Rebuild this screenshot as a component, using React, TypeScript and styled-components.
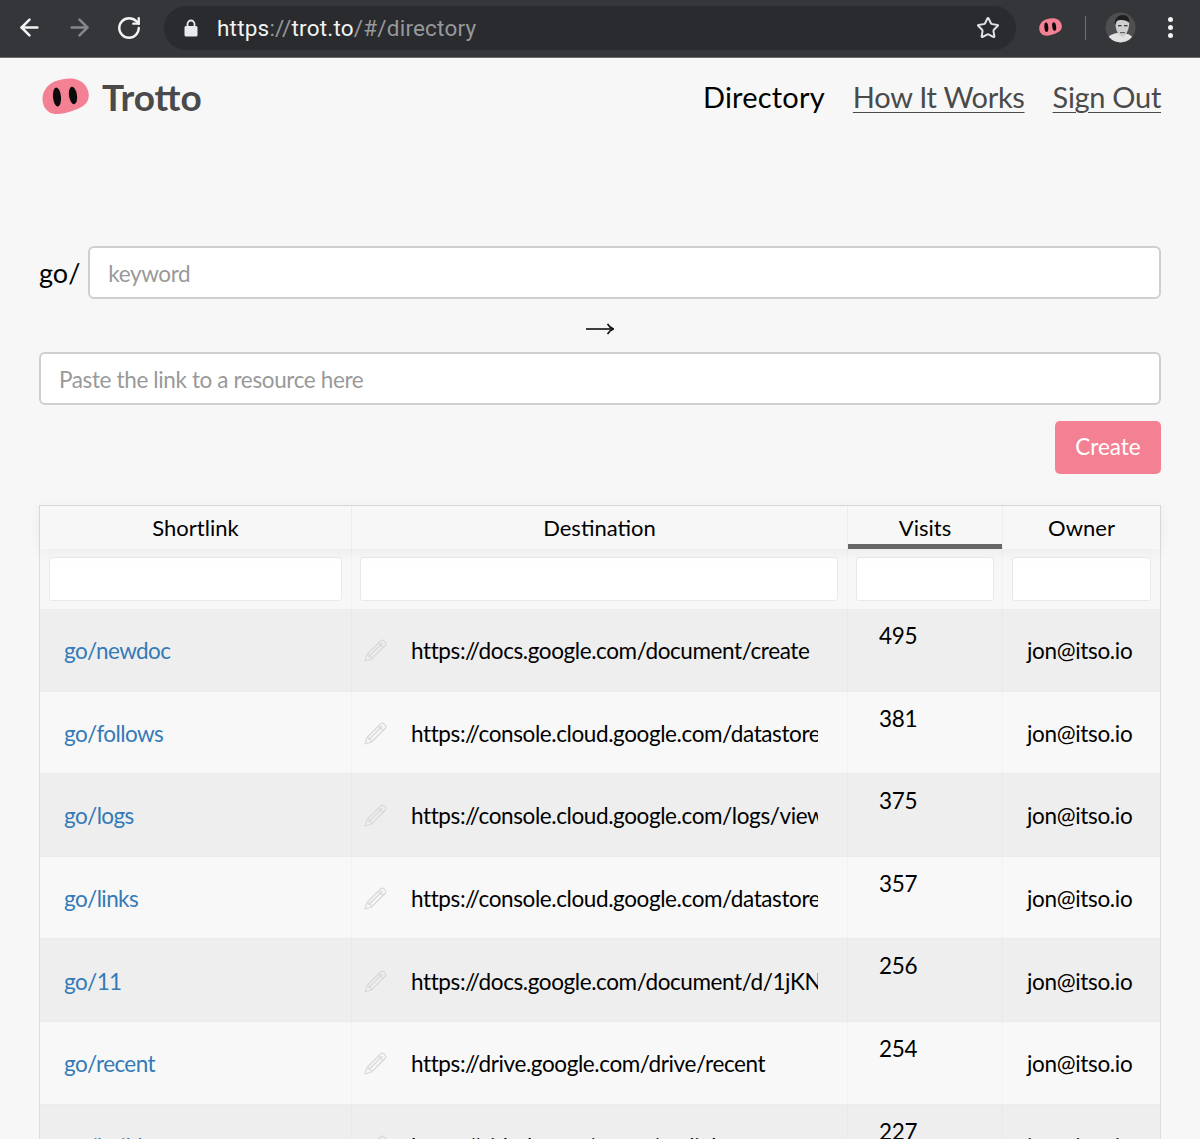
import React from 'react';
import styled, { createGlobalStyle } from 'styled-components';
import { ArrowLeft, ArrowRight, RotateCw, Star } from 'lucide-react';

const GlobalStyle = createGlobalStyle`
  html, body {
    margin: 0;
    padding: 0;
    background: #f7f7f7;
    font-family: Lato, "Liberation Sans", sans-serif;
  }
  * {
    box-sizing: border-box;
  }
`;

const Screen = styled.div`
  width: 1200px;
  height: 1139px;
  overflow: hidden;
  background: #f7f7f7;
`;

const BrowserBar = styled.div`
  height: 58px;
  display: flex;
  align-items: center;
  padding: 0 0 2px 16px;
  background: #35363a;
  border-bottom: 1px solid #6d6e70;
`;

const NavIcons = styled.div`
  display: flex;
  align-items: center;
  gap: 23px;
  width: 148px;
`;

const AddressBar = styled.div`
  width: 852px;
  height: 44px;
  display: flex;
  align-items: center;
  padding: 0 16px 0 20px;
  border-radius: 22px;
  background: #292b2e;
`;

const Url = styled.div`
  flex: 1;
  margin-left: 19px;
  font-family: Roboto, "Liberation Sans", sans-serif;
  font-size: 22.5px;
  letter-spacing: 0.2px;
  color: #96989b;
`;

const UrlPart = styled.span<{ $bright?: boolean }>`
  color: ${(p) => (p.$bright ? '#f1f3f4' : '#96989b')};
`;

const ToolIcons = styled.div`
  display: flex;
  align-items: center;
  margin-left: 23px;
`;

const Divider = styled.div`
  width: 1px;
  height: 24px;
  margin: 0 19px 0 23px;
  background: #6f7073;
`;

const Kebab = styled.div`
  display: flex;
  flex-direction: column;
  gap: 3px;
  margin-left: 32px;
`;

const KebabDot = styled.span`
  width: 5px;
  height: 5px;
  border-radius: 50%;
  background: #f1f3f4;
`;

const Page = styled.div`
  padding: 0 39px;
`;

const Header = styled.header`
  height: 76px;
  display: flex;
  align-items: center;
  justify-content: space-between;
`;

const Brand = styled.div`
  display: flex;
  align-items: center;
  gap: 13px;
  margin-left: 3px;
  font-size: 37px;
  font-weight: 700;
  color: #4a4a4a;
`;

const Nav = styled.nav`
  display: flex;
  gap: 28px;
  font-size: 29px;
`;

const NavLink = styled.a<{ $active?: boolean }>`
  color: ${(p) => (p.$active ? '#000' : '#4a4a4a')};
  letter-spacing: ${(p) => (p.$active ? '0.2px' : '-0.3px')};
  text-decoration: ${(p) => (p.$active ? 'none' : 'underline')};
  text-decoration-thickness: 1px;
  text-underline-offset: 4px;
`;

const KeywordRow = styled.div`
  margin-top: 112px;
  display: flex;
  align-items: center;
  gap: 8px;
`;

const GoLabel = styled.span`
  font-size: 27px;
  color: #000;
`;

const TextField = styled.input`
  flex: 1;
  width: 100%;
  display: block;
  height: 53px;
  padding: 2px 18px 0;
  background: #fff;
  border: 2px solid #cfcfcf;
  border-radius: 6px;
  font-family: Lato, sans-serif;
  font-size: 22.5px;
  letter-spacing: -0.37px;
  outline: none;

  &::placeholder {
    color: #999;
    opacity: 1;
  }
`;

const ArrowRow = styled.div`
  height: 53px;
  display: flex;
  align-items: center;
  justify-content: center;
  padding-top: 7px;
`;

const CreateRow = styled.div`
  display: flex;
  justify-content: flex-end;
  margin-top: 16px;
`;

const CreateButton = styled.button`
  width: 106px;
  height: 53px;
  padding: 0 0 2px;
  border: none;
  border-radius: 5px;
  background: #f48093;
  color: #fff;
  font-family: Lato, sans-serif;
  font-size: 22.5px;
`;

const Table = styled.div`
  margin-top: 31px;
  border: 1px solid #dcdcdc;
  border-bottom: none;
`;

const Columns = styled.div`
  display: grid;
  grid-template-columns: 312px 496px 155px 157px;
`;

const HeadRow = styled(Columns)`
  height: 43px;
  position: relative;
  box-shadow: 0 2px 15px rgba(0, 0, 0, 0.06);
`;

const HeadCell = styled.div<{ $sorted?: boolean }>`
  display: flex;
  align-items: center;
  justify-content: center;
  font-size: 22px;
  color: #000;
  border-right: 1px solid rgba(0, 0, 0, 0.04);
  box-shadow: ${(p) => (p.$sorted ? 'inset 0 -5px 0 #666' : 'none')};

  &:last-child {
    border-right: none;
  }
`;

const FilterRow = styled(Columns)`
  height: 60px;
`;

const FilterCell = styled.div`
  padding: 8px 9px;
  border-right: 1px solid rgba(0, 0, 0, 0.02);

  &:nth-child(2) {
    padding-left: 8px;
  }

  &:nth-child(3) {
    padding: 8px;
  }

  &:last-child {
    border-right: none;
  }
`;

const FilterInput = styled.input`
  display: block;
  width: 100%;
  height: 44px;
  background: #fff;
  border: 1px solid #e9e9e9;
  border-radius: 3px;
  outline: none;
`;

const Row = styled(Columns)<{ $odd: boolean }>`
  height: 82.6px;
  background: ${(p) => (p.$odd ? '#eeeeee' : '#f8f8f8')};
  border-bottom: 1px solid #ebebeb;
  font-size: 22.5px;
  letter-spacing: -0.33px;
  color: #000;
`;

const Cell = styled.div`
  display: flex;
  align-items: center;
  padding: 2px 24px 0;
  border-right: 1px solid rgba(0, 0, 0, 0.02);
  overflow: hidden;

  &:last-child {
    border-right: none;
  }
`;

const ShortLink = styled.a`
  color: #337ab7;
  letter-spacing: -0.6px;
  text-decoration: none;
`;

const DestinationCell = styled(Cell)`
  padding: 2px 29px 0 12px;
  gap: 24px;
`;

const Destination = styled.span`
  flex: 1;
  min-width: 0;
  letter-spacing: -0.4px;
  white-space: nowrap;
  overflow: hidden;
`;

const VisitsCell = styled(Cell)`
  align-items: flex-start;
  padding: 13px 0 0 31px;
`;

const Snout: React.FC<{ width: number }> = ({ width }) => (
  <svg width={width} viewBox="0 0 47 37" aria-hidden="true">
    <path
      d="M0.5 20C1 12 7 5 14 3C20 1 27 0 33 1C41 3 46.5 9 46.8 17C47 25 41 29 34 31.5C27 34 20 36.5 13 36C5 35.5 0 28 0.5 20Z"
      fill="#f48093"
    />
    <ellipse cx="15" cy="19" rx="4" ry="9.6" fill="#0b0b0b" transform="rotate(-5 15 19)" />
    <ellipse cx="31" cy="17.5" rx="4" ry="8.8" fill="#0b0b0b" transform="rotate(-8 31 17.5)" />
  </svg>
);

const LockIcon: React.FC = () => (
  <svg width="14" height="18" viewBox="0 0 14 18" aria-hidden="true">
    <path d="M3.5 8V5a3.5 3.5 0 0 1 7 0v3" fill="none" stroke="#e8eaed" strokeWidth="1.8" />
    <rect x="0.5" y="7" width="13" height="10.5" rx="1.5" fill="#e8eaed" />
  </svg>
);

const Avatar: React.FC = () => (
  <svg width="31" height="31" viewBox="0 0 31 31" aria-hidden="true">
    <defs>
      <clipPath id="avatar-clip">
        <circle cx="15.5" cy="15.5" r="15" />
      </clipPath>
    </defs>
    <g clipPath="url(#avatar-clip)">
      <rect width="31" height="31" fill="#4e4f51" />
      <path d="M0 31C1 25 6 22 12 21L23 22C27 24 30 27 30 31Z" fill="#e2e2e2" />
      <path d="M11 8C14 5 21 5 24 8C25 13 23 22 18 25C14 25 11 19 10.5 13Z" fill="#cfcfcf" />
      <path d="M10 13C9 7 13 3 18 3C22 3 25 6 24.5 11C22 8 15 7 12 9C11 10 11 12 10 13Z" fill="#1f1f1f" />
      <rect x="13" y="13" width="3.5" height="1.3" fill="#3a3a3a" />
      <rect x="19" y="13" width="3.5" height="1.3" fill="#3a3a3a" />
      <rect x="15" y="20" width="5" height="1.2" fill="#666" />
    </g>
  </svg>
);

const PencilIcon: React.FC = () => (
  <svg width="23" height="23" viewBox="0 0 23 23" fill="none" stroke="#d9d9d9" strokeWidth="1.2" strokeLinejoin="round" aria-hidden="true">
    <path d="M1 22L3 15.5L16.5 2C17.6 0.9 19 0.9 20.2 2L21 2.8C22.1 4 22.1 5.4 21 6.5L7.5 20Z" />
    <path d="M3 15.5C4.5 15.5 5 16 5 17.5C6.5 17.5 7.5 18.5 7.5 20" />
    <path d="M5 17.5L18.5 4" />
    <path d="M14.5 4L19 8.5" />
  </svg>
);

const LongArrow: React.FC = () => (
  <svg width="28" height="12" viewBox="0 0 28 12" fill="none" stroke="#111" strokeWidth="1.6" aria-hidden="true">
    <path d="M0 6H27" />
    <path d="M21.5 1C23 3.5 25 5.2 27.5 6C25 6.8 23 8.5 21.5 11" />
  </svg>
);

const ROWS = [
  { link: 'go/newdoc', url: 'https://docs.google.com/document/create', visits: 495 },
  { link: 'go/follows', url: 'https://console.cloud.google.com/datastore/entities', visits: 381 },
  { link: 'go/logs', url: 'https://console.cloud.google.com/logs/viewer', visits: 375 },
  { link: 'go/links', url: 'https://console.cloud.google.com/datastore/entities', visits: 357 },
  { link: 'go/11', url: 'https://docs.google.com/document/d/1jKNbT0Yw', visits: 256 },
  { link: 'go/recent', url: 'https://drive.google.com/drive/recent', visits: 254 },
  { link: 'go/build', url: 'https://github.com/trotto/go-links', visits: 227 },
];

const App: React.FC = () => (
  <Screen>
    <GlobalStyle />
    <BrowserBar>
      <NavIcons>
        <ArrowLeft size={27} color="#f1f3f4" strokeWidth={2.2} />
        <ArrowRight size={27} color="#85878a" strokeWidth={2.2} />
        <RotateCw size={26} color="#f1f3f4" strokeWidth={2.2} />
      </NavIcons>
      <AddressBar>
        <LockIcon />
        <Url>
          <UrlPart $bright>https</UrlPart>
          ://
          <UrlPart $bright>trot.to</UrlPart>
          /#/directory
        </Url>
        <Star size={24} color="#dfe1e5" strokeWidth={2} />
      </AddressBar>
      <ToolIcons>
        <Snout width={23} />
        <Divider />
        <Avatar />
        <Kebab>
          <KebabDot />
          <KebabDot />
          <KebabDot />
        </Kebab>
      </ToolIcons>
    </BrowserBar>
    <Page>
      <Header>
        <Brand>
          <Snout width={47} />
          Trotto
        </Brand>
        <Nav>
          <NavLink $active>Directory</NavLink>
          <NavLink>How It Works</NavLink>
          <NavLink>Sign Out</NavLink>
        </Nav>
      </Header>
      <KeywordRow>
        <GoLabel>go/</GoLabel>
        <TextField placeholder="keyword" />
      </KeywordRow>
      <ArrowRow>
        <LongArrow />
      </ArrowRow>
      <TextField placeholder="Paste the link to a resource here" />
      <CreateRow>
        <CreateButton>Create</CreateButton>
      </CreateRow>
      <Table>
        <HeadRow>
          <HeadCell>Shortlink</HeadCell>
          <HeadCell>Destination</HeadCell>
          <HeadCell $sorted>Visits</HeadCell>
          <HeadCell>Owner</HeadCell>
        </HeadRow>
        <FilterRow>
          <FilterCell><FilterInput /></FilterCell>
          <FilterCell><FilterInput /></FilterCell>
          <FilterCell><FilterInput /></FilterCell>
          <FilterCell><FilterInput /></FilterCell>
        </FilterRow>
        {ROWS.map((row, i) => (
          <Row key={row.link} $odd={i % 2 === 0}>
            <Cell>
              <ShortLink>{row.link}</ShortLink>
            </Cell>
            <DestinationCell>
              <PencilIcon />
              <Destination>{row.url}</Destination>
            </DestinationCell>
            <VisitsCell>{row.visits}</VisitsCell>
            <Cell>jon@itso.io</Cell>
          </Row>
        ))}
      </Table>
    </Page>
  </Screen>
);

export default App;
